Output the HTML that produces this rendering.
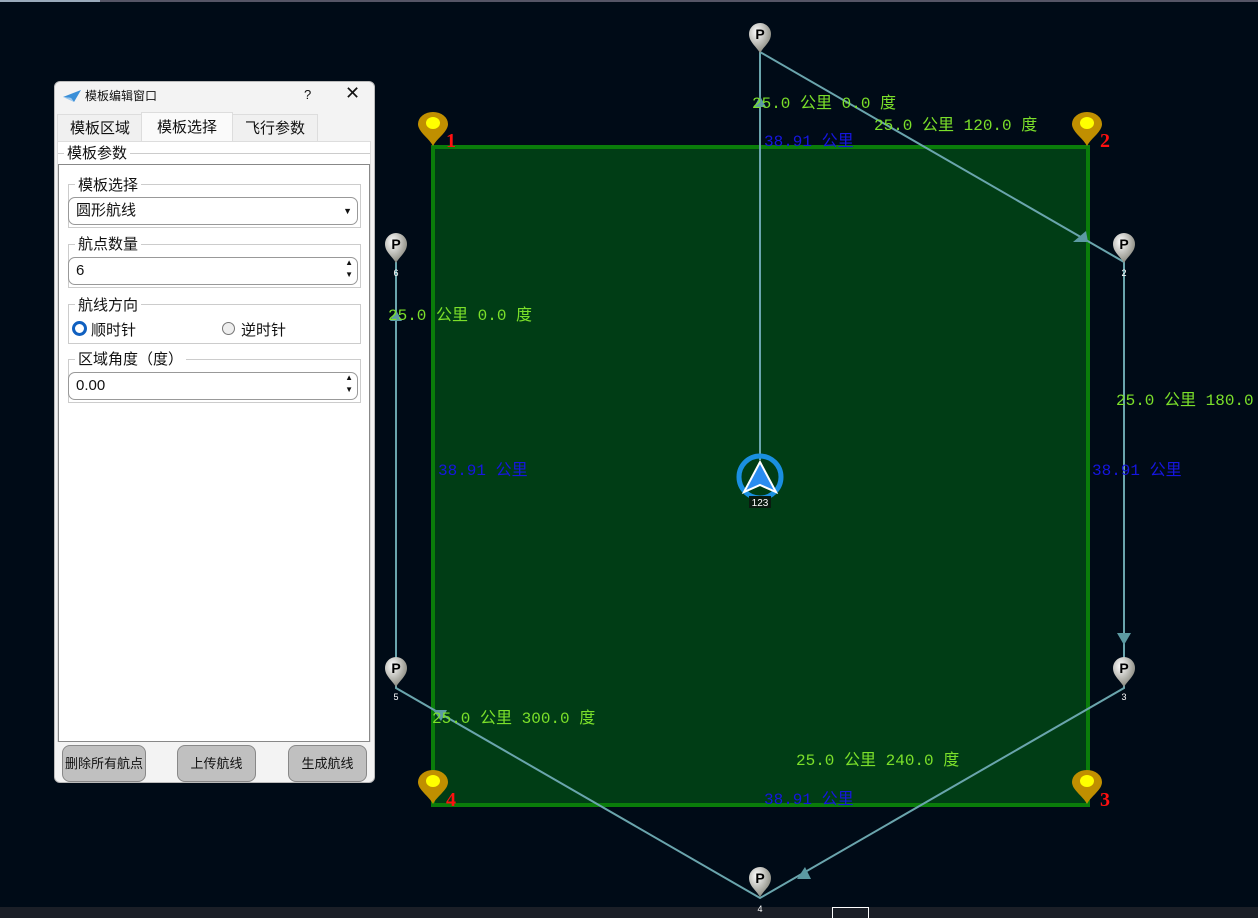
<!DOCTYPE html>
<html><head><meta charset="utf-8"><style>
body{margin:0;width:1258px;height:918px;background:#000b17;overflow:hidden;position:relative;font-family:"Liberation Sans","Noto Sans CJK SC",sans-serif}
.t{position:absolute;font-family:"Liberation Mono","Noto Sans CJK SC",monospace;font-size:16px;white-space:nowrap;line-height:18px}
.g{color:#7be02a}.b{color:#1616e0}
#dlg{position:absolute;left:54px;top:81px;width:321px;height:702px;background:#f3f3f3;border-radius:6px;border:1px solid #bbb;box-sizing:border-box;font-size:15px;color:#111}
.ab{position:absolute}
.btn{position:absolute;top:663px;height:35px;background:#c0c0c0;border:1px solid #888;border-radius:8px;font-size:13px;text-align:center;line-height:35px}
.box{position:absolute;border:1px solid #ccc}
.inp{position:absolute;left:13px;width:290px;height:28px;background:#fff;border:1px solid #999;border-radius:7px;box-sizing:border-box;padding-left:7px;line-height:26px;font-size:15px}
.lg{position:absolute;background:#fff;padding:0 3px;font-size:15px;line-height:16px}
</style></head><body>
<div class="ab" style="left:0;top:0;width:1258px;height:2px;background:#556"></div>
<div class="ab" style="left:0;top:0;width:100px;height:2px;background:#9ab"></div>
<div class="ab" style="left:0;top:907px;width:1258px;height:11px;background:#1b1f27"></div>
<div class="ab" style="left:832px;top:907px;width:37px;height:11px;border:1px solid #fff;border-bottom:none;box-sizing:border-box"></div>
<svg class="ab" style="left:0;top:0" width="1258" height="918">
<rect x="433" y="147" width="655" height="658" fill="#003d15" stroke="#0a7d0a" stroke-width="4"/>
<g stroke="#6aa5ad" stroke-width="2" fill="none">
<path d="M760 52V460M760 52L1124 262V688L760 898L396 688V262"/>
</g>
<g fill="#5c9aa2">
<path d="M1073 242L1088 242L1086 231Z"/>
<path d="M1117 633H1131L1124 645Z"/>
<path d="M797 879L811 879L805 867Z"/>
<path d="M433 710L447 710L441 721Z"/>
<path d="M390 321L402 321L396 310Z"/>
<path d="M754 107L766 107L760 96Z"/>
</g>
<defs><radialGradient id="pg" cx="35%" cy="30%" r="70%"><stop offset="0" stop-color="#fff"/><stop offset="1" stop-color="#8a8a80"/></radialGradient></defs>
<g>
<g transform="translate(760,38)"><path d="M0 15C-4 8-11 4-11-4A11 11 0 0 1 11-4C11 4 4 8 0 15Z" fill="url(#pg)"/><text x="0" y="1" text-anchor="middle" font-size="14" font-weight="bold" fill="#000" font-family="Liberation Sans">P</text></g>
<g transform="translate(1124,248)"><path d="M0 15C-4 8-11 4-11-4A11 11 0 0 1 11-4C11 4 4 8 0 15Z" fill="url(#pg)"/><text x="0" y="1" text-anchor="middle" font-size="14" font-weight="bold" fill="#000" font-family="Liberation Sans">P</text></g>
<g transform="translate(1124,672)"><path d="M0 15C-4 8-11 4-11-4A11 11 0 0 1 11-4C11 4 4 8 0 15Z" fill="url(#pg)"/><text x="0" y="1" text-anchor="middle" font-size="14" font-weight="bold" fill="#000" font-family="Liberation Sans">P</text></g>
<g transform="translate(760,882)"><path d="M0 15C-4 8-11 4-11-4A11 11 0 0 1 11-4C11 4 4 8 0 15Z" fill="url(#pg)"/><text x="0" y="1" text-anchor="middle" font-size="14" font-weight="bold" fill="#000" font-family="Liberation Sans">P</text></g>
<g transform="translate(396,672)"><path d="M0 15C-4 8-11 4-11-4A11 11 0 0 1 11-4C11 4 4 8 0 15Z" fill="url(#pg)"/><text x="0" y="1" text-anchor="middle" font-size="14" font-weight="bold" fill="#000" font-family="Liberation Sans">P</text></g>
<g transform="translate(396,248)"><path d="M0 15C-4 8-11 4-11-4A11 11 0 0 1 11-4C11 4 4 8 0 15Z" fill="url(#pg)"/><text x="0" y="1" text-anchor="middle" font-size="14" font-weight="bold" fill="#000" font-family="Liberation Sans">P</text></g>
</g>
<g font-size="9" fill="#fff" text-anchor="middle" font-family="Liberation Sans">
<text x="1124" y="276">2</text><text x="1124" y="700">3</text><text x="760" y="912">4</text><text x="396" y="700">5</text><text x="396" y="276">6</text>
</g>
<g>
<g transform="translate(433,128)"><path d="M0 18C-4 10-15 4-15-4A15 12 0 0 1 15-4C15 4 4 10 0 18Z" fill="#c08f00"/><ellipse cx="0" cy="-5" rx="7" ry="6" fill="#ffff00"/></g>
<g transform="translate(1087,128)"><path d="M0 18C-4 10-15 4-15-4A15 12 0 0 1 15-4C15 4 4 10 0 18Z" fill="#c08f00"/><ellipse cx="0" cy="-5" rx="7" ry="6" fill="#ffff00"/></g>
<g transform="translate(1087,786)"><path d="M0 18C-4 10-15 4-15-4A15 12 0 0 1 15-4C15 4 4 10 0 18Z" fill="#c08f00"/><ellipse cx="0" cy="-5" rx="7" ry="6" fill="#ffff00"/></g>
<g transform="translate(433,786)"><path d="M0 18C-4 10-15 4-15-4A15 12 0 0 1 15-4C15 4 4 10 0 18Z" fill="#c08f00"/><ellipse cx="0" cy="-5" rx="7" ry="6" fill="#ffff00"/></g>
</g>
<g fill="#ff1010" font-size="20" font-weight="bold" font-family="Liberation Serif">
<text x="446" y="147">1</text><text x="1100" y="147">2</text><text x="1100" y="806">3</text><text x="446" y="806">4</text>
</g>
<circle cx="760" cy="477" r="21" fill="none" stroke="#1a8fe0" stroke-width="5"/>
<path d="M760 462L776 492L760 485L744 492Z" fill="#2a8cf0" stroke="#fff" stroke-width="2"/>
<rect x="749" y="496" width="22" height="12" fill="#0a1a10"/>
<text x="760" y="506" font-size="10" fill="#fff" text-anchor="middle" font-family="Liberation Sans">123</text>
</svg>
<div class="t g" style="left:752px;top:95px">25.0 公里 0.0 度</div>
<div class="t g" style="left:874px;top:117px">25.0 公里 120.0 度</div>
<div class="t g" style="left:388px;top:307px">25.0 公里 0.0 度</div>
<div class="t g" style="left:1116px;top:392px">25.0 公里 180.0</div>
<div class="t g" style="left:432px;top:710px">25.0 公里 300.0 度</div>
<div class="t g" style="left:796px;top:752px">25.0 公里 240.0 度</div>
<div class="t b" style="left:764px;top:133px">38.91 公里</div>
<div class="t b" style="left:438px;top:462px">38.91 公里</div>
<div class="t b" style="left:1092px;top:462px">38.91 公里</div>
<div class="t b" style="left:764px;top:791px">38.91 公里</div>

<div id="dlg">
<svg class="ab" style="left:7px;top:7px" width="20" height="14"><path d="M1 8L19 1L12 13L9 9Z" fill="#3a8fd8"/><path d="M1 8L9 9L12 13" fill="#9cc8ee"/></svg>
<div class="ab" style="left:30px;top:5px;font-size:12px">模板编辑窗口</div>
<div class="ab" style="left:249px;top:5px;font-size:13px">?</div>
<div class="ab" style="left:290px;top:1px;font-size:18px">✕</div>
<div class="ab" style="left:2px;top:32px;width:84px;height:28px;background:#f0f0f0;border:1px solid #ddd;text-align:center;line-height:28px">模板区域</div>
<div class="ab" style="left:86px;top:30px;width:90px;height:30px;background:#fafafa;border:1px solid #ddd;border-bottom:none;text-align:center;line-height:30px">模板选择</div>
<div class="ab" style="left:177px;top:32px;width:84px;height:28px;background:#f0f0f0;border:1px solid #ddd;text-align:center;line-height:28px">飞行参数</div>
<div class="ab" style="left:2px;top:59px;width:314px;height:601px;background:#fff;border:1px solid #ddd;box-sizing:border-box"></div>
<div class="box" style="left:3px;top:71px;width:312px;height:2px;border:none;border-top:1px solid #ccc"></div>
<div class="lg" style="left:9px;top:64px">模板参数</div>
<div class="ab" style="left:3px;top:82px;width:312px;height:578px;border:1px solid #888;box-sizing:border-box;background:#fff"></div>
<div class="box" style="left:13px;top:102px;width:291px;height:42px"></div>
<div class="lg" style="left:20px;top:96px">模板选择</div>
<div class="inp" style="top:115px">圆形航线<span style="position:absolute;right:5px;top:0;font-size:9px">▼</span></div>
<div class="box" style="left:13px;top:162px;width:291px;height:42px"></div>
<div class="lg" style="left:20px;top:155px">航点数量</div>
<div class="inp" style="top:175px">6<span style="position:absolute;right:4px;top:-1px;font-size:8px;line-height:12px">▲<br>▼</span></div>
<div class="box" style="left:13px;top:222px;width:291px;height:38px"></div>
<div class="lg" style="left:20px;top:216px">航线方向</div>
<div class="ab" style="left:17px;top:239px;width:9px;height:9px;border:3px solid #1060c0;border-radius:50%;background:#fff"></div>
<div class="ab" style="left:36px;top:237px">顺时针</div>
<div class="ab" style="left:167px;top:240px;width:11px;height:11px;border:1px solid #777;border-radius:50%;background:#eee"></div>
<div class="ab" style="left:186px;top:237px">逆时针</div>
<div class="box" style="left:13px;top:277px;width:291px;height:42px"></div>
<div class="lg" style="left:20px;top:270px">区域角度（度）</div>
<div class="inp" style="top:290px">0.00<span style="position:absolute;right:4px;top:-1px;font-size:8px;line-height:12px">▲<br>▼</span></div>
<div class="btn" style="left:7px;width:82px">删除所有航点</div>
<div class="btn" style="left:122px;width:77px">上传航线</div>
<div class="btn" style="left:233px;width:77px">生成航线</div>
</div>
</body></html>
